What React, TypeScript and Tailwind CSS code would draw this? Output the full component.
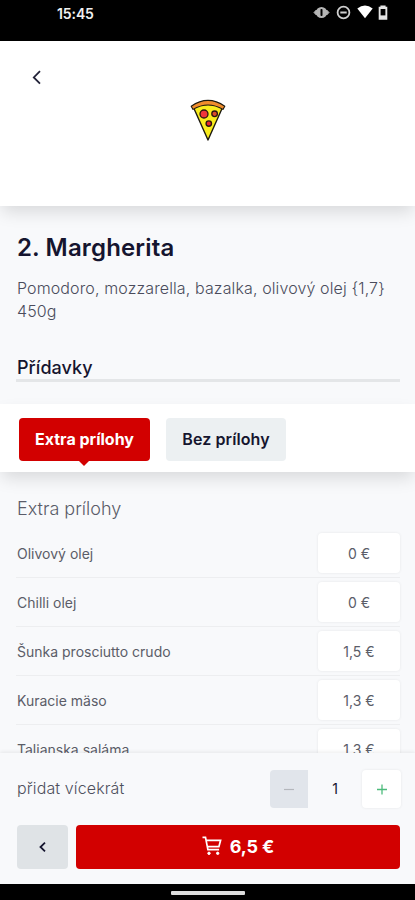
import React, { useState } from 'react';

const extras = [
  { name: 'Olivový olej', price: '0 €' },
  { name: 'Chilli olej', price: '0 €' },
  { name: 'Šunka prosciutto crudo', price: '1,5 €' },
  { name: 'Kuracie mäso', price: '1,3 €' },
  { name: 'Talianska saláma', price: '1,3 €' },
];

const tabs = ['Extra prílohy', 'Bez prílohy'];

const StatusBar = () => (
  <div className="flex h-[41px] shrink-0 items-start justify-between bg-black pl-[57px] pr-[27px]">
    <span className="mt-[4px] text-[14px] leading-[19px] font-semibold tracking-[-0.1px] text-[#f1f1f1]">15:45</span>
    <div className="mt-[5px] flex items-start">
      <svg width="17" height="15" viewBox="0 0 17 15" className="mr-[6px]">
        <path d="M1 7.5 3.4 5v5zM16 7.5 13.6 5v5z" fill="#b5b5b5" stroke="#b5b5b5" />
        <circle cx="8.5" cy="7.5" r="5.6" fill="#b5b5b5" />
        <rect x="7.5" y="4" width="2" height="7" rx="0.8" fill="#000" />
      </svg>
      <svg width="15" height="15" viewBox="0 0 15 15" className="mr-[6px]">
        <circle cx="7.5" cy="7.5" r="5.9" fill="none" stroke="#cfcfcf" strokeWidth="1.8" />
        <path d="M4.3 7.5h6.4" stroke="#cfcfcf" strokeWidth="2" />
      </svg>
      <svg width="16" height="15" viewBox="0 0 16 15" className="mr-[5px]">
        <path d="M0.3 3.6Q8-2.4 15.7 3.6L8 13.2z" fill="#fff" />
      </svg>
      <svg width="10" height="15" viewBox="0 0 10 15">
        <path d="M2.4 0.5h5.2v1.3h1.7v12.9H0.7V1.8h1.7z" fill="#e6e6e6" />
        <path d="M2.6 4h4.8v6.4H2.6z" fill="#000" />
      </svg>
    </div>
  </div>
);

const PizzaIcon = () => (
  <svg width="36" height="43" viewBox="0 0 36 43">
    <path d="M3.5 8.5Q18 2 32.5 8.5L18 41z" fill="#f9ec1d" stroke="#1d1a10" strokeWidth="1.4" strokeLinejoin="round" />
    <path d="M1.2 7.2Q18-4.5 34.8 7.2L33 10.4Q18 1.5 3 10.4z" fill="#f08c2c" stroke="#1d1a10" strokeWidth="1.1" strokeLinejoin="round" />
    <circle cx="14" cy="15" r="4" fill="#f0353a" stroke="#2a1510" strokeWidth="1.3" />
    <circle cx="24.6" cy="14.8" r="2.8" fill="#d94b2c" stroke="#2a1510" strokeWidth="1.3" />
    <circle cx="18.8" cy="24.6" r="2.7" fill="#e8262f" stroke="#2a1510" strokeWidth="1.4" />
  </svg>
);

const CartIcon = () => (
  <svg width="20" height="20" viewBox="0 0 20 20" fill="none" stroke="#fff" strokeWidth="1.7">
    <path d="M0.5 1.3h3l2.4 12.4h11.2M4.2 4.3h14.4l-1.7 6.4H5.4" />
    <circle cx="7" cy="17.3" r="1.2" fill="#fff" strokeWidth="1" />
    <circle cx="15.7" cy="17.3" r="1.2" fill="#fff" strokeWidth="1" />
  </svg>
);

const App = () => {
  const [activeTab, setActiveTab] = useState(tabs[0]);
  const [count, setCount] = useState(1);

  return (
    <div className="flex h-[900px] w-[415px] flex-col overflow-hidden bg-[#f8f9fb] font-['Inter',sans-serif] text-[#15152f]">
      <StatusBar />

      {/* Header */}
      <header className="relative flex h-[165px] shrink-0 items-start bg-white shadow-[0_8px_16px_-2px_rgba(0,0,0,0.13)]">
        <button className="ml-[31px] mt-[29px] flex h-[15px] w-[11px] items-center justify-center">
          <svg width="11" height="15" viewBox="0 0 11 15" fill="none" stroke="#232338" strokeWidth="1.8">
            <path d="M9 1.2 2.8 7.4 9 13.6" />
          </svg>
        </button>
        <div className="ml-[148px] mt-[58px]">
          <PizzaIcon />
        </div>
      </header>

      <main className="flex min-h-0 flex-1 flex-col overflow-hidden">
        <section className="shrink-0 pl-4 pr-[15px] pt-[26px]">
          <h1 className="pl-px text-[24px] leading-8 font-semibold tracking-[0.15px]">2. Margherita</h1>
          <p className="mt-[13px] whitespace-nowrap pl-px text-[16px] leading-[23px] font-light tracking-[0.12px] text-[#4a4c5c]">
            Pomodoro, mozzarella, bazalka, olivový olej {'{1,7}'}
            <br />
            450g
          </p>
          <h2 className="mt-[32px] h-[27px] border-b-[3px] border-[#e4e6e8] pl-px text-[18px] leading-[25px] font-medium tracking-[0.05px]">
            Přídavky
          </h2>
        </section>

        {/* Tabs */}
        <div className="relative mt-[22px] flex h-[68px] shrink-0 gap-4 bg-white pl-[19px] pt-[14px] shadow-[0_8px_16px_-2px_rgba(0,0,0,0.13)]">
          {tabs.map((tab) => (
            <button
              key={tab}
              onClick={() => setActiveTab(tab)}
              className={`relative h-[43px] rounded-[4px] pb-px text-[16px] ${
                tab === activeTab
                  ? 'w-[131px] bg-[#d20000] font-bold text-white'
                  : 'w-[120px] bg-[#ecf0f2] font-semibold tracking-[0.1px]'
              }`}
            >
              {tab}
              {tab === activeTab && (
                <span className="absolute -bottom-[5px] left-[60px] border-x-[5px] border-t-[5px] border-x-transparent border-t-[#d20000]" />
              )}
            </button>
          ))}
        </div>

        {/* Extras */}
        <section className="shrink-0 pl-4 pr-[15px] pt-[24px]">
          <h3 className="mb-[7px] pl-px text-[18px] leading-[26px] font-light text-[#5a5c69]">{activeTab}</h3>
          {extras.map((extra) => (
            <div
              key={extra.name}
              className="flex h-[49px] items-center justify-between border-b border-[#edeef0] pl-px text-[14px] text-[#5b5d68]"
            >
              <span>{extra.name}</span>
              <span className="flex h-[40px] w-[82px] items-center justify-center rounded-[4px] bg-white shadow-[0_0_3px_rgba(0,0,0,0.08)]">
                {extra.price}
              </span>
            </div>
          ))}
        </section>
      </main>

      {/* Order bar */}
      <footer className="relative shrink-0 bg-[#f8f9fb] pl-4 pr-[15px] shadow-[0_-1px_4px_rgba(0,0,0,0.08)]">
        <div className="flex h-[72px] items-center">
          <span className="flex-1 pb-[2px] pl-px text-[16px] font-light tracking-[0.12px] text-[#4e505d]">přidat vícekrát</span>
          <button
            onClick={() => setCount(Math.max(1, count - 1))}
            className="flex h-[38px] w-[38px] items-center justify-center rounded-l-[4px] bg-[#e1e5eb]"
          >
            <svg width="12" height="12" viewBox="0 0 12 12" stroke="#b4b7bc" strokeWidth="1.2">
              <path d="M1 6.5h10" />
            </svg>
          </button>
          <span className="w-[54px] pb-px text-center text-[14px]">{count}</span>
          <button
            onClick={() => setCount(count + 1)}
            className="-mr-px flex h-[38px] w-[39px] items-center justify-center rounded-[4px] bg-white shadow-[0_0_3px_rgba(0,0,0,0.08)]"
          >
            <svg width="12" height="12" viewBox="0 0 12 12" stroke="#4dbb7c" strokeWidth="1.3">
              <path d="M1 6.5h10M6 1.5v10" />
            </svg>
          </button>
        </div>
        <div className="flex h-[59px] gap-2 pl-px">
          <button className="flex h-[44px] w-[51px] items-center justify-center rounded-[4px] bg-[#dfe3e6]">
            <svg width="9" height="12" viewBox="0 0 9 12" fill="none" stroke="#15152f" strokeWidth="1.8">
              <path d="M7 1.7 2.5 6 7 10.3" />
            </svg>
          </button>
          <button className="flex h-[44px] flex-1 items-center justify-center gap-2 rounded-[4px] bg-[#d20000] pb-[2px] text-[18px] font-bold tracking-[-0.1px] text-white">
            <CartIcon />
            6,5 €
          </button>
        </div>
      </footer>

      <div className="flex h-[16px] shrink-0 justify-center bg-black pt-[7px]">
        <div className="h-[4px] w-[74px] rounded-[1px] bg-[#dedede]" />
      </div>
    </div>
  );
};

export default App;
